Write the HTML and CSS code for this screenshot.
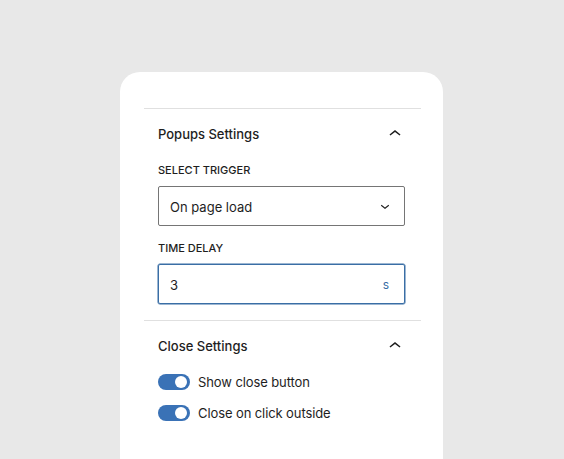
FILE: index.html
```html
<!DOCTYPE html>
<html>
<head>
<meta charset="utf-8">
<link rel="stylesheet" href="styles.css">
</head>
<body>
<div class="card">
  <section class="panel">
    <div class="panel-header">
      <span class="panel-title">Popups Settings</span>
      <svg class="chev" width="24" height="24" viewBox="0 0 24 24"><path d="M6.5 12.4L12 8l5.5 4.4-.9 1.2L12 9.9l-4.6 3.7z" fill="#1e1e1e"/></svg>
    </div>
    <div class="panel-body">
      <label class="ctl-label">Select Trigger</label>
      <div class="field select">
        <span>On page load</span>
        <svg width="18" height="18" viewBox="0 0 24 24"><path d="M17.5 11.6L12 16l-5.5-4.4.9-1.2L12 14l4.6-3.6z" fill="#1e1e1e"/></svg>
      </div>
      <label class="ctl-label second">Time Delay</label>
      <div class="field input">
        <span>3</span>
        <span class="suffix">s</span>
      </div>
    </div>
  </section>
  <section class="panel">
    <div class="panel-header">
      <span class="panel-title">Close Settings</span>
      <svg class="chev" width="24" height="24" viewBox="0 0 24 24"><path d="M6.5 12.4L12 8l5.5 4.4-.9 1.2L12 9.9l-4.6 3.7z" fill="#1e1e1e"/></svg>
    </div>
    <div class="toggles">
      <div class="toggle-row"><span class="toggle"><span class="knob"></span></span><span>Show close button</span></div>
      <div class="toggle-row"><span class="toggle"><span class="knob"></span></span><span>Close on click outside</span></div>
    </div>
  </section>
</div>
</body>
</html>
```
FILE: styles.css
```css
html, body {
  margin: 0;
  padding: 0;
  height: 100%;
  overflow: hidden;
}
body {
  background: #e8e8e8;
  font-family: Inter, "Noto Sans", "Liberation Sans", sans-serif;
  color: #1e1e1e;
  padding-top: 72px;
  box-sizing: border-box;
}
.card {
  margin-left: 120px;
  width: 323px;
  height: 387px;
  background: #fff;
  border-radius: 20px 20px 0 0;
  padding: 36px 22px 0 24px;
  box-sizing: border-box;
}
.panel {
  border-top: 1px solid #e0e0e0;
}
.panel-header {
  height: 49px;
  display: flex;
  align-items: center;
  justify-content: space-between;
  padding: 0 16px 0 14px;
}
.panel-title {
  font-size: 13px;
  font-weight: 500;
  padding-top: 1px;
}
.chev {
  margin-right: -2px;
}
.panel-body {
  padding: 4px 16px 16px 14px;
  display: flex;
  flex-direction: column;
}
.ctl-label {
  font-size: 11px;
  font-weight: 500;
  text-transform: uppercase;
  line-height: 16px;
  margin-bottom: 8px;
}
.ctl-label.second {
  margin-top: 14px;
}
.field {
  height: 40px;
  box-sizing: border-box;
  border-radius: 2px;
  display: flex;
  align-items: center;
  justify-content: space-between;
  font-size: 13px;
}
.field > span:first-child {
  padding-top: 1px;
}
.select {
  border: 1px solid #757575;
  padding: 0 10px 0 11px;
}
.input {
  border: 1px solid #3a6ea5;
  box-shadow: 0 0 0 0.5px #3a6ea5;
  padding: 0 15px 0 11px;
}
.suffix {
  color: #3a6ea5;
  font-size: 12px;
}
.toggles {
  padding: 2px 14px 0;
  display: flex;
  flex-direction: column;
  gap: 11px;
}
.toggle-row {
  display: flex;
  align-items: center;
  gap: 8px;
  height: 20px;
  font-size: 13px;
  letter-spacing: -0.1px;
}
.toggle {
  width: 32px;
  height: 16px;
  border-radius: 8px;
  background: #3a72b6;
  display: flex;
  align-items: center;
  justify-content: flex-end;
  padding: 0 3px;
  box-sizing: border-box;
}
.knob {
  width: 12px;
  height: 12px;
  border-radius: 50%;
  background: #fff;
}
```
